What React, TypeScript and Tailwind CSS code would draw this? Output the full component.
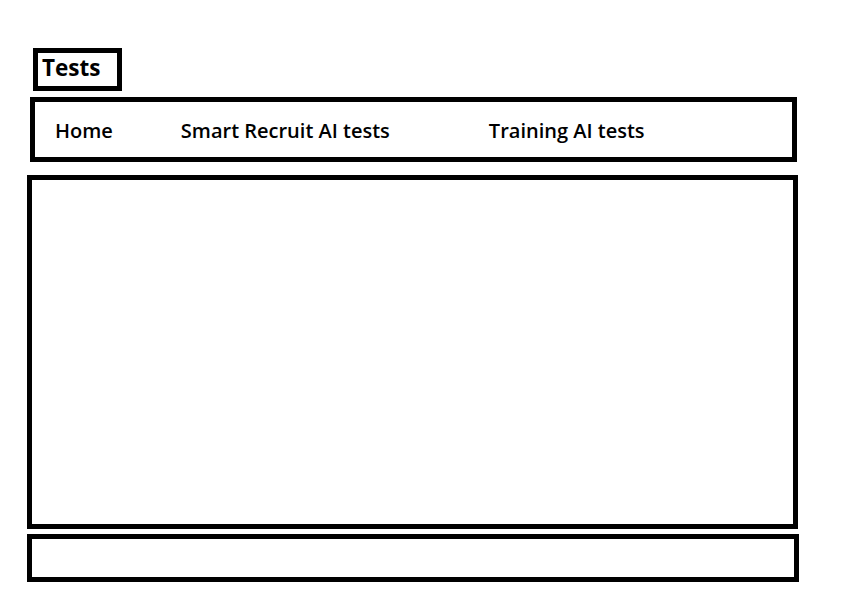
export default function App() {
  return (
    <div className="min-h-screen bg-white text-black font-['Open_Sans','Noto_Sans',sans-serif]">
      <div className="flex flex-col items-start pl-[27px] pt-[48px]">
        {/* title */}
        <div className="ml-[6px] w-[89px] h-[43px] border-[5px] border-black flex items-center pl-[4px]">
          <h1 className="text-[22.5px] font-bold leading-none -mt-[3px]">Tests</h1>
        </div>

        {/* nav */}
        <nav className="ml-[3px] mt-[6px] w-[767px] h-[65px] border-[5px] border-black flex items-center pl-[20px] text-[20px] font-semibold">
          <a className="mt-[2px]">Home</a>
          <a className="ml-[68px] mt-[2px]">Smart Recruit AI tests</a>
          <a className="ml-[99px] mt-[2px]">Training AI tests</a>
        </nav>

        {/* content */}
        <main className="mt-[13px] w-[771px] h-[354px] border-[5px] border-black" />

        {/* footer */}
        <footer className="mt-[5px] w-[772px] h-[48px] border-[5px] border-black" />
      </div>
    </div>
  );
}
